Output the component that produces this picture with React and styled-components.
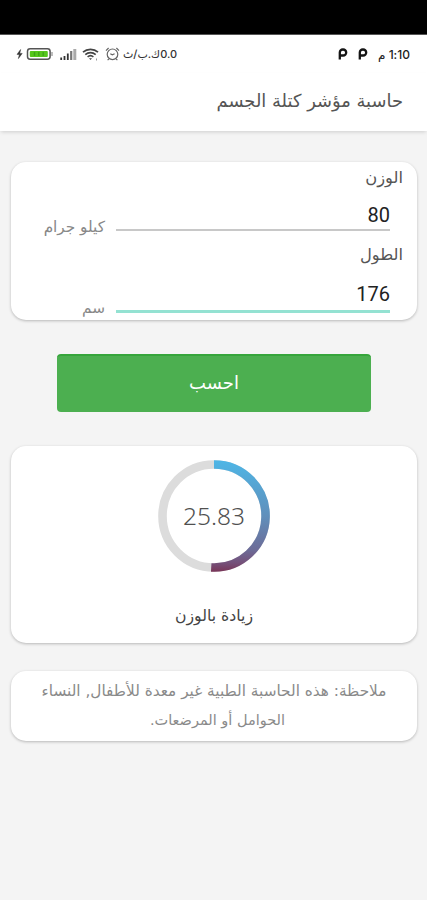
import React, { useState } from 'react'
import styled, { createGlobalStyle } from 'styled-components'

const GlobalStyle = createGlobalStyle`
  * {
    box-sizing: border-box;
  }

  body {
    margin: 0;
    background: #f4f4f4;
    font-family: 'DejaVu Sans', sans-serif;
  }
`

const BatteryIcon = () => (
  <svg width="38" height="14" viewBox="0 0 38 14">
    <path d="M4.6 2.5 1 7.4h2.4L2.4 11.6 6.2 6.4H3.8z" fill="#333" stroke="#333" strokeWidth="0.5" />
    <rect x="11.5" y="1.8" width="22.6" height="10.4" rx="2.6" fill="#fff" stroke="#555" strokeWidth="1.5" />
    <rect x="13.8" y="3.9" width="18" height="6.2" rx="1" fill="#55c51c" />
    <path d="M18.5 5v4M22.8 5v4M27.2 5v4" stroke="#3da318" strokeWidth="1.4" />
    <path d="M36 5v4" stroke="#999" strokeWidth="1.3" />
  </svg>
)

const SignalIcon = () => (
  <svg width="17" height="12" viewBox="0 0 17 12">
    <path d="M1.2 9.5V12M4.5 8V12M7.8 5.5V12" stroke="#333" strokeWidth="1.8" />
    <path d="M11.2 3V12" stroke="#777" strokeWidth="2.2" />
    <path d="M14.8 1V12" stroke="#aaa" strokeWidth="3" />
  </svg>
)

const WifiIcon = () => (
  <svg width="17" height="13" viewBox="0 0 17 13" fill="none" stroke="#444">
    <path d="M1 4.2C5.2.4 11.8.4 16 4.2" strokeWidth="1.7" />
    <path d="M3.3 6.6c3-2.7 7.4-2.7 10.4 0" strokeWidth="1.6" />
    <path d="M5.6 8.9c1.7-1.5 4.1-1.5 5.8 0" strokeWidth="1.5" />
    <path d="M7 10.2h3L8.5 12z" fill="#444" stroke="none" />
    <path d="M14.5 10.5v2" stroke="#999" />
  </svg>
)

const AlarmIcon = () => (
  <svg width="15" height="14" viewBox="0 0 15 14" fill="none" stroke="#666" strokeWidth="1.2">
    <circle cx="7.5" cy="7.3" r="5.3" />
    <path d="M1 3.6 3.6 1M14 3.6 11.4 1M4 11.8 2.6 13.2M11 11.8l1.4 1.4" />
    <path d="M5.3 6.8 7.3 7.8l2.3-1" />
  </svg>
)

const ParkingIcon = () => (
  <svg width="10" height="12" viewBox="0 0 10 12">
    <path d="M1.8 11.6V4.4a2.9 2.9 0 0 1 2.9-2.9h.5a3 3 0 0 1 0 6H2" fill="none" stroke="#151515" strokeWidth="2.3" />
  </svg>
)

// the arc runs slightly past the half of the circle
const Gauge = ({ value }) => (
  <GaugeStyles>
    <svg width="112" height="112" viewBox="0 0 112 112" fill="none" strokeWidth="8.6">
      <defs>
        <linearGradient id="arc" x1="0" y1="0" x2="0" y2="112" gradientUnits="userSpaceOnUse">
          <stop offset="0" stopColor="#4eb6e6" />
          <stop offset="0.5" stopColor="#608fbb" />
          <stop offset="0.8" stopColor="#6c6c98" />
          <stop offset="0.92" stopColor="#755079" />
          <stop offset="1" stopColor="#793557" />
        </linearGradient>
      </defs>
      <circle cx="56" cy="56" r="51.5" stroke="#dcdcdc" />
      <path d="M56 4.5A51.5 51.5 0 1 1 53.2 107.42" stroke="url(#arc)" />
    </svg>
    <span>{value}</span>
  </GaugeStyles>
)

const Field = ({ label, unit, value, onChange, active }) => (
  <FieldStyles>
    <FieldLabel>{label}</FieldLabel>
    <FieldRow>
      <FieldInput value={value} onChange={(e) => onChange(e.target.value)} $active={active} />
      <Unit $active={active}>{unit}</Unit>
    </FieldRow>
  </FieldStyles>
)

export default function App() {
  const [weight, setWeight] = useState('80')
  const [height, setHeight] = useState('176')
  const [bmi, setBmi] = useState('25.83')

  const calculate = () => {
    const meters = height / 100
    if (!meters) return
    setBmi((weight / (meters * meters)).toFixed(2))
  }

  return (
    <Screen dir="rtl" lang="ar">
      <GlobalStyle />
      <Notch />
      <StatusBar>
        <StatusGroup>
          <Clock>1:10 م</Clock>
          <ParkingIcon />
          <ParkingIcon />
        </StatusGroup>
        <StatusIcons>
          <Speed>0.0ك.ب/ث</Speed>
          <AlarmIcon />
          <WifiIcon />
          <SignalIcon />
          <BatteryIcon />
        </StatusIcons>
      </StatusBar>
      <Header>
        <Title>حاسبة مؤشر كتلة الجسم</Title>
      </Header>
      <Content>
        <FormCard>
          <Field label="الوزن" unit="كيلو جرام" value={weight} onChange={setWeight} />
          <Field label="الطول" unit="سم" value={height} onChange={setHeight} active />
        </FormCard>
        <Button onClick={calculate}>احسب</Button>
        <ResultCard>
          <Gauge value={bmi} />
          <Status>زيادة بالوزن</Status>
        </ResultCard>
        <NoteCard>
          <NoteLine $size={15.3}>ملاحظة: هذه الحاسبة الطبية غير معدة للأطفال, النساء</NoteLine>
          <NoteLine $size={14.5} $shift={7}>الحوامل أو المرضعات.</NoteLine>
        </NoteCard>
      </Content>
    </Screen>
  )
}

const Screen = styled.div`
  width: 427px;
  height: 900px;
  overflow: hidden;
  background: #f4f4f4;
`

const Notch = styled.div`
  height: 35px;
  background: #000;
  border-bottom: 1px solid #555;
`

const StatusBar = styled.div`
  display: flex;
  justify-content: space-between;
  align-items: center;
  height: 38px;
  padding: 0 17px 0 16px;
  background: #fff;
`

const StatusGroup = styled.div`
  display: flex;
  align-items: center;
  gap: 10px;
`

const StatusIcons = styled.div`
  display: flex;
  align-items: center;
  gap: 5.5px;
`

const Clock = styled.span`
  font-family: Inter, 'DejaVu Sans', sans-serif;
  font-size: 12px;
  font-weight: 500;
  letter-spacing: 0.7px;
  color: #222;
`

const Speed = styled.span`
  margin-left: -2px;
  font-family: Inter, 'DejaVu Sans', sans-serif;
  font-size: 11px;
  font-weight: 500;
  color: #333;
  white-space: nowrap;
`

const Header = styled.header`
  display: flex;
  align-items: center;
  height: 58px;
  padding: 0 24px 3px;
  background: #fff;
  box-shadow: 0 2px 4px -1px rgba(0, 0, 0, 0.16);
`

const Title = styled.h1`
  margin: 0;
  font-size: 17.9px;
  font-weight: 400;
  color: #555;
  white-space: nowrap;
`

const Content = styled.main`
  display: flex;
  flex-direction: column;
  padding: 31px 10px 0 11px;
`

const Card = styled.section`
  background: #fff;
  border-radius: 15px;
  box-shadow: 0 1px 3px rgba(0, 0, 0, 0.25);
`

const FormCard = styled(Card)`
  height: 158px;
  padding: 0 14px 0 0;
`

const FieldStyles = styled.div`
  height: 77px;
`

const FieldLabel = styled.div`
  height: 32px;
  line-height: 31px;
  font-size: 16.3px;
  color: #555;
`

const FieldRow = styled.div`
  display: flex;
  align-items: flex-start;
  padding-right: 13px;
`

const FieldInput = styled.input`
  width: 274px;
  height: ${props => props.$active ? '42px' : '37px'};
  padding: ${props => props.$active ? '7px 0 0' : '6px 0 0'};
  border: none;
  border-bottom: ${props => props.$active ? '3px solid #94e2d2' : '2px solid #c8c8c8'};
  outline: none;
  background: transparent;
  font-family: Roboto, sans-serif;
  font-size: 20px;
  color: #222;
`

const Unit = styled.span`
  margin-right: 11px;
  height: 37px;
  line-height: ${props => props.$active ? '74px' : '66px'};
  font-size: 15.3px;
  color: #888;
  white-space: nowrap;
`

const Button = styled.button`
  align-self: center;
  width: 314px;
  height: 58px;
  margin: 34px 0;
  padding: 0 0 3px;
  border: none;
  border-top: 2px solid #36a53b;
  border-radius: 4px;
  background: #4caf50;
  color: #fff;
  font-family: 'DejaVu Sans', sans-serif;
  font-size: 18px;
  cursor: pointer;
`

const ResultCard = styled(Card)`
  display: flex;
  flex-direction: column;
  align-items: center;
  height: 197px;
  padding-top: 14px;
`

const GaugeStyles = styled.div`
  display: grid;
  place-items: center;

  > * {
    grid-area: 1 / 1;
  }

  span {
    padding-bottom: 1px;
    font-family: 'Noto Sans', sans-serif;
    font-size: 24.5px;
    font-weight: 300;
    color: #505050;
  }
`

const Status = styled.div`
  margin-top: 29px;
  line-height: 30px;
  font-size: 15.7px;
  color: #444;
`

const NoteCard = styled(Card)`
  height: 70px;
  margin-top: 28px;
  padding-top: 6px;
  text-align: center;
  color: #8a8a8a;
`

const NoteLine = styled.p`
  margin: 0;
  padding-left: ${props => props.$shift || 0}px;
  font-size: ${props => props.$size}px;
  line-height: 29px;
  white-space: nowrap;
`
